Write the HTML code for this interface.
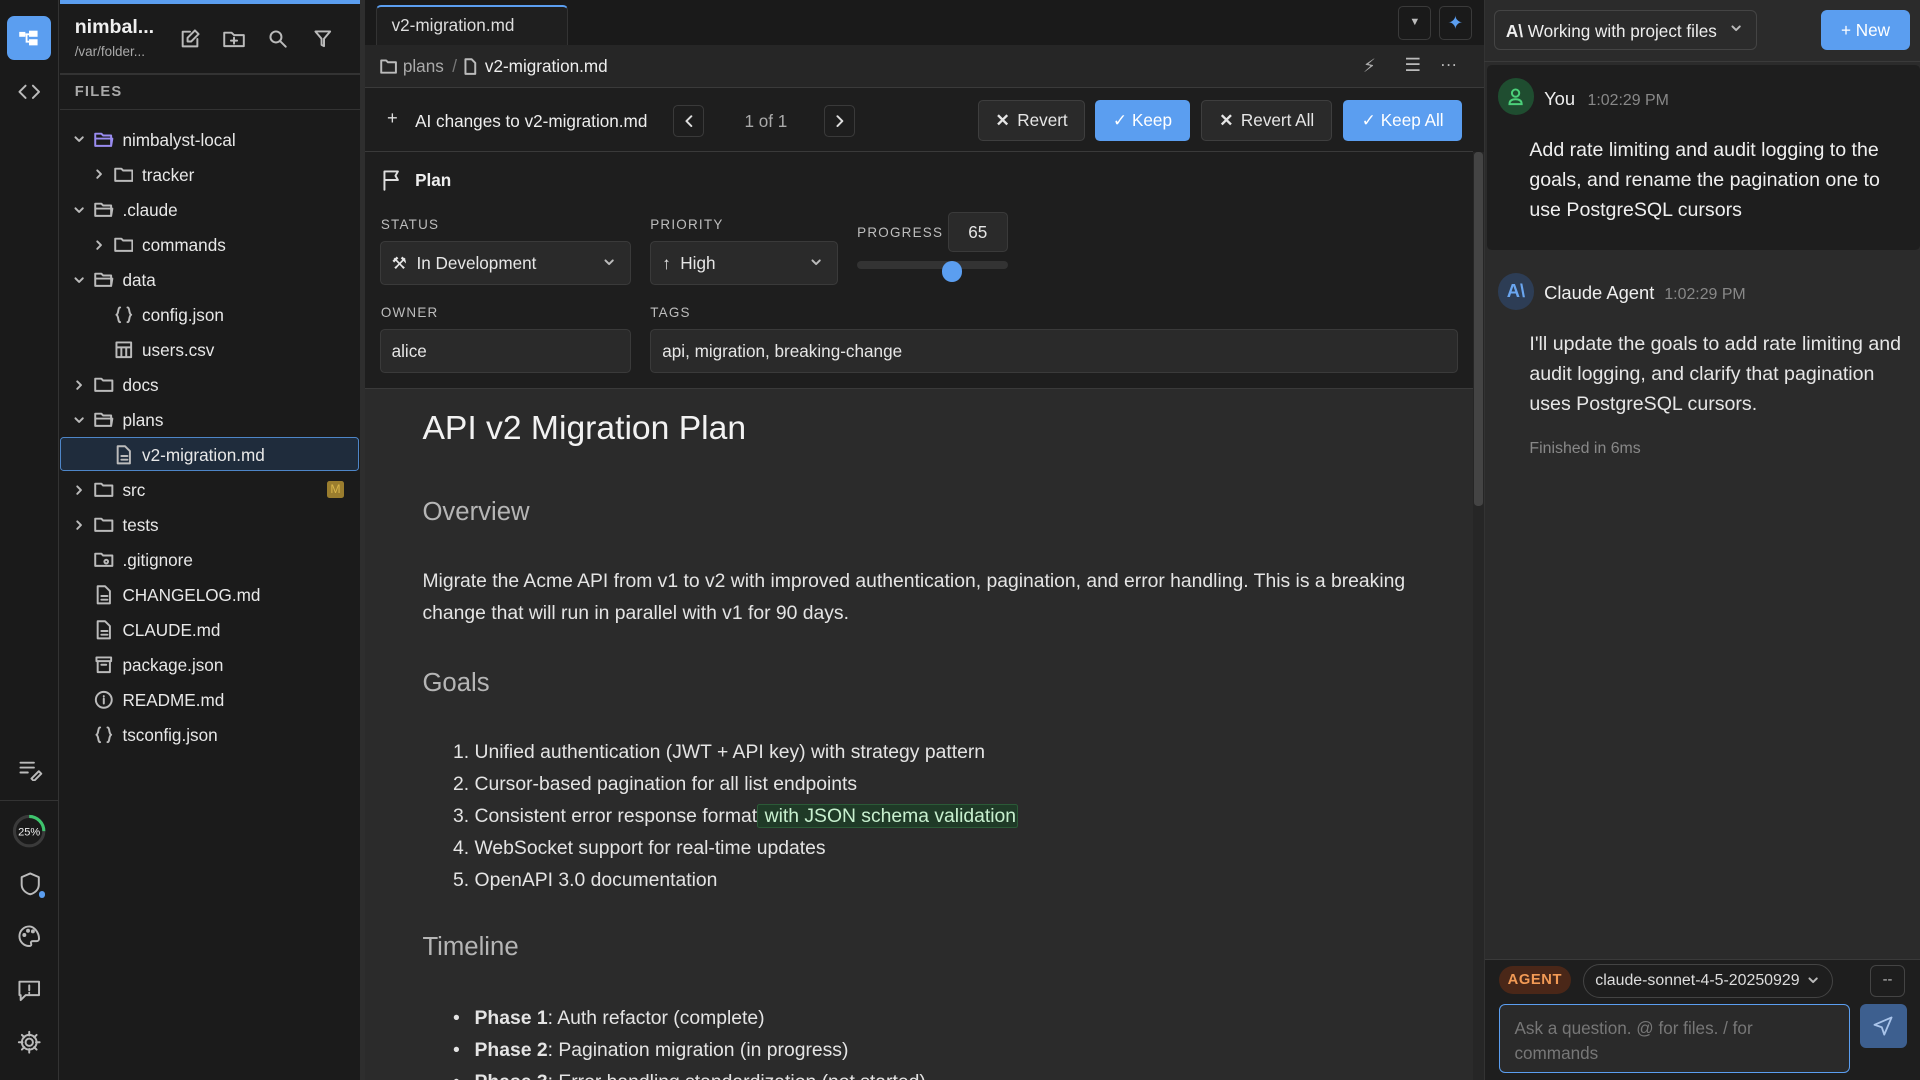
<!DOCTYPE html>
<html><head><meta charset="utf-8"><style>
*{box-sizing:border-box;margin:0;padding:0}
html,body{width:1920px;height:1080px;overflow:hidden;background:#1b1b1b}
#r{position:relative;width:1568px;height:882px;zoom:1.2244898;font-family:"Liberation Sans",sans-serif;color:#e6e6e6;overflow:hidden}
.a{position:absolute}
svg{display:block}
.ic{stroke:#bbb;fill:none;stroke-width:1.6;stroke-linecap:round;stroke-linejoin:round}
.row{position:absolute;left:49px;width:245px;height:28px;font-size:14px;color:#e8e8e8}
.row svg{position:absolute}
.row span{position:absolute}
.lbl{font-size:11px;letter-spacing:1px;color:#bdbdbd}
.inp{position:absolute;background:#2a2a2a;border:1px solid #3a3a3a;border-radius:4px;font-size:14px;color:#e6e6e6;display:flex;align-items:center;padding-left:9px}
.btn{position:absolute;top:82px;height:33px;border-radius:4px;font-size:14px;display:flex;align-items:center;justify-content:center;gap:6px}
.c{font-size:15.8px;color:#e4e4e4}
.dd{position:absolute;right:12px;top:13px}
</style></head><body><div id="r">
<!-- rail -->
<div class="a" style="left:0;top:0;width:48px;height:882px;background:#1a1a1a;border-right:1px solid #333"></div>
<div class="a" style="left:6px;top:13px;width:36px;height:36px;background:#5b9ef0;border-radius:6px"></div>
<svg class="a" style="left:15px;top:22px" width="18" height="18" viewBox="0 0 18 18"><rect x="1" y="4" width="5" height="4" fill="#fff"/><rect x="9" y="3" width="7" height="5" fill="#fff"/><rect x="9" y="10" width="7" height="5" fill="#fff"/><path d="M6 6h3M7 6v6h2" stroke="#fff" stroke-width="1.5" fill="none"/></svg>
<svg class="a ic" style="left:14px;top:67px" width="20" height="16" viewBox="0 0 20 16"><path d="M7 3 2 8l5 5M13 3l5 5-5 5"/></svg>
<svg class="a ic" style="left:15px;top:620px" width="20" height="18" viewBox="0 0 20 18"><path d="M2 3h11M2 7h11M2 11h6M11 16l6-6 2 2-6 6z"/></svg>
<div class="a" style="left:0;top:653px;width:48px;height:1px;background:#333"></div>
<svg class="a" style="left:10px;top:665px" width="28" height="28" viewBox="0 0 28 28"><circle cx="14" cy="14" r="12" stroke="#3a3a3a" stroke-width="2.5" fill="none"/><path d="M14 2a12 12 0 0 1 12 12" stroke="#3ec46d" stroke-width="2.5" fill="none"/><text x="14" y="17.5" font-size="9" fill="#eee" text-anchor="middle" font-family="Liberation Sans">25%</text></svg>
<svg class="a ic" style="left:15px;top:711px" width="20" height="22" viewBox="0 0 20 22"><path d="M10 2 3 5v6c0 4 3 7 7 8 4-1 7-4 7-8V5z"/></svg>
<div class="a" style="left:32px;top:728px;width:5px;height:5px;border-radius:50%;background:#5b9ef0"></div>
<svg class="a ic" style="left:14px;top:755px" width="20" height="20" viewBox="0 0 20 20"><path d="M10 2a8 8 0 0 0 0 16c1.5 0 2-1 1.5-2s0-2 1.5-2H16a2 2 0 0 0 2-2c0-5-4-10-8-10z"/><circle cx="6" cy="9" r=".8"/><circle cx="9" cy="5.5" r=".8"/><circle cx="13" cy="6" r=".8"/></svg>
<svg class="a ic" style="left:14px;top:799px" width="20" height="20" viewBox="0 0 20 20"><path d="M2 3h16v11H7l-4 4v-4H2zM10 6v4M10 12v.5"/></svg>
<svg class="a ic" style="left:14px;top:841px" width="20" height="20" viewBox="0 0 20 20"><circle cx="10" cy="10" r="3"/><path d="M10 1.5v3M10 15.5v3M1.5 10h3M15.5 10h3M4 4l2 2M14 14l2 2M4 16l2-2M14 6l2-2"/><circle cx="10" cy="10" r="6"/></svg>
<!-- file sidebar -->
<div class="a" style="left:49px;top:0;width:245px;height:882px;background:#1b1b1b"></div>
<div class="a" style="left:49px;top:0;width:245px;height:3px;background:#5b9ef0"></div>
<div class="a" style="left:61px;top:13px;font-size:16px;font-weight:bold;color:#f0f0f0">nimbal...</div>
<div class="a" style="left:61px;top:36px;font-size:11px;color:#aaa">/var/folder...</div>
<svg class="a ic" style="left:146px;top:23px" width="18" height="18" viewBox="0 0 18 18"><path d="M15 9v6H3V3h6M13 2l3 3-6 6H7V8z"/></svg>
<svg class="a ic" style="left:182px;top:24px" width="18" height="16" viewBox="0 0 18 16"><path d="M1 3h6l2 2h8v9H1zM9 7v5M6.5 9.5h5"/></svg>
<svg class="a ic" style="left:219px;top:24px" width="16" height="16" viewBox="0 0 16 16"><circle cx="6.5" cy="6.5" r="4.5"/><path d="m10 10 4.5 4.5"/></svg>
<svg class="a ic" style="left:256px;top:24px" width="16" height="16" viewBox="0 0 16 16"><path d="M2 2h12l-5 6v6l-2-1V8z"/></svg>
<div class="a" style="left:49px;top:60px;width:245px;height:1px;background:#333"></div>
<div class="a" style="left:61px;top:69px;font-size:12px;font-weight:bold;letter-spacing:1px;color:#aaa">FILES</div>
<div class="a" style="left:49px;top:89px;width:245px;height:1px;background:#333"></div>

<div class="a" style="left:49px;top:357px;width:244px;height:28px;background:#1f2c3c;border:1px solid #4e86c8;border-radius:3px"></div>

<div id="tree"></div>
<div class="a" style="left:267px;top:393px;width:14px;height:14px;background:#9a7d2e;border-radius:2px;color:#d8b54a;font-size:10px;text-align:center;line-height:14px">M</div>

<div class="a" style="left:294px;top:0;width:4px;height:882px;background:#2e2e2e"></div>
<!-- editor -->
<div class="a" style="left:298px;top:0;width:914px;height:37px;background:#1a1a1a"></div>
<div class="a" style="left:307px;top:4px;width:157px;height:33px;background:#1f1f1f;border:1px solid #333;border-bottom:none;border-top:2px solid #5b9ef0;border-radius:4px 4px 0 0;font-size:14px;color:#ddd;padding:7px 0 0 12px">v2-migration.md</div>
<div class="a" style="left:1142px;top:5px;width:27px;height:28px;border:1px solid #3a3a3a;border-radius:4px;color:#bbb;font-size:9px;text-align:center;line-height:26px">▼</div>
<div class="a" style="left:1175px;top:5px;width:27px;height:28px;border:1px solid #3a3a3a;border-radius:4px;color:#5b9ef0;font-size:15px;text-align:center;line-height:26px">✦</div>
<div class="a" style="left:298px;top:37px;width:914px;height:35px;background:#262626;border-bottom:1px solid #3a3a3a"></div>
<svg class="a ic" style="left:310px;top:47px" width="14" height="14" viewBox="0 0 14 14"><path d="M1 2h4l1.5 1.5H13V12H1z"/></svg>
<div class="a" style="left:329px;top:46px;font-size:14px;color:#aaa">plans <span style="color:#777;margin:0 3px">/</span></div>
<svg class="a ic" style="left:378px;top:47px" width="12" height="14" viewBox="0 0 12 14"><path d="M2 1h5l3 3v9H2z"/></svg>
<div class="a" style="left:396px;top:46px;font-size:14px;color:#eee">v2-migration.md</div>
<div class="a" style="left:1113px;top:45px;color:#aaa;font-size:15px">⚡︎</div>
<div class="a" style="left:1147px;top:44px;color:#bbb;font-size:15px">☰</div>
<div class="a" style="left:1176px;top:44px;color:#bbb;font-size:14px">···</div>

<div class="a" style="left:298px;top:72px;width:914px;height:245px;background:#1e1e1e"></div>
<div class="a" style="left:298px;top:123px;width:905px;height:1px;background:#3a3a3a"></div>
<div class="a" style="left:316px;top:87px;font-size:15px;color:#ddd">+</div>
<div class="a" style="left:339px;top:91px;font-size:14px;color:#eee">AI changes to v2-migration.md</div>
<div class="a" style="left:550px;top:86px;width:25px;height:26px;border:1px solid #3a3a3a;border-radius:4px"><svg class="ic" style="margin:7px 0 0 8px;stroke:#ddd" width="8" height="10" viewBox="0 0 8 10"><path d="M6 1 2 5l4 4"/></svg></div>
<div class="a" style="left:608px;top:91px;font-size:14px;color:#aaa">1 of 1</div>
<div class="a" style="left:673px;top:86px;width:25px;height:26px;border:1px solid #3a3a3a;border-radius:4px"><svg class="ic" style="margin:7px 0 0 8px;stroke:#ddd" width="8" height="10" viewBox="0 0 8 10"><path d="m2 1 4 4-4 4"/></svg></div>
<div class="btn" style="left:799px;width:87px;background:#2a2a2a;border:1px solid #3e3e3e;color:#e6e6e6"><b>✕</b> Revert</div>
<div class="btn" style="left:894px;width:78px;background:#5b9ef0;color:#fff">✓ Keep</div>
<div class="btn" style="left:981px;width:107px;background:#2a2a2a;border:1px solid #3e3e3e;color:#e6e6e6"><b>✕</b> Revert All</div>
<div class="btn" style="left:1097px;width:97px;background:#5b9ef0;color:#fff">✓ Keep All</div>

<svg class="a ic" style="left:312px;top:138px;stroke:#ddd" width="16" height="18" viewBox="0 0 16 18"><path d="M2 17V2h11l-2 3.5 2 3.5H2"/></svg>
<div class="a" style="left:339px;top:139px;font-size:14px;font-weight:bold;color:#eee">Plan</div>
<div class="a lbl" style="left:311px;top:177px">STATUS</div>
<div class="a lbl" style="left:531px;top:177px">PRIORITY</div>
<div class="a lbl" style="left:700px;top:184px">PROGRESS</div>
<div class="inp" style="left:310px;top:197px;width:205px;height:36px">⚒&nbsp; In Development<svg class="dd ic" width="10" height="8" viewBox="0 0 10 8"><path d="m2 2 3 3 3-3"/></svg></div>
<div class="inp" style="left:531px;top:197px;width:153px;height:36px">↑&nbsp; High<svg class="dd ic" width="10" height="8" viewBox="0 0 10 8"><path d="m2 2 3 3 3-3"/></svg></div>
<div class="inp" style="left:774px;top:173px;width:49px;height:33px;justify-content:center;padding:0;font-size:14px">65</div>
<div class="a" style="left:700px;top:213px;width:123px;height:7px;background:#333;border-radius:4px"></div>
<div class="a" style="left:769px;top:213px;width:17px;height:17px;background:#5b9ef0;border-radius:50%"></div>
<div class="a lbl" style="left:311px;top:249px">OWNER</div>
<div class="a lbl" style="left:531px;top:249px">TAGS</div>
<div class="inp" style="left:310px;top:269px;width:205px;height:36px">alice</div>
<div class="inp" style="left:531px;top:269px;width:660px;height:36px">api, migration, breaking-change</div>

<div class="a" style="left:298px;top:317px;width:905px;height:565px;background:#2b2b2b;border-top:1px solid #3a3a3a"></div>
<div class="a" style="left:1203px;top:124px;width:9px;height:758px;background:#262626"></div>
<div class="a" style="left:1204px;top:124px;width:7px;height:289px;background:#444;border-radius:3px"></div>

<div class="a" style="left:345px;top:335px;font-size:27.5px;color:#f2f2f2">API v2 Migration Plan</div>
<div class="a" style="left:345px;top:407px;font-size:21px;color:#b5b5b5">Overview</div>
<div class="a c" style="left:345px;top:462px;width:830px;line-height:26px">Migrate the Acme API from v1 to v2 with improved authentication, pagination, and error handling. This is a breaking change that will run in parallel with v1 for 90 days.</div>
<div class="a" style="left:345px;top:546px;font-size:21px;color:#b5b5b5">Goals</div>
<div class="a c" style="left:370px;top:601px;line-height:26.2px">
1. Unified authentication (JWT + API key) with strategy pattern<br>
2. Cursor-based pagination for all list endpoints<br>
3. Consistent error response format<span style="background:#1f3a27;border:1px solid #2b5a37;border-radius:2px;color:#c8f0cf;padding:0 1px"> with JSON schema validation</span><br>
4. WebSocket support for real-time updates<br>
5. OpenAPI 3.0 documentation</div>
<div class="a" style="left:345px;top:762px;font-size:21px;color:#b5b5b5">Timeline</div>
<div class="a c" style="left:370px;top:818px;line-height:26.2px">
<span style="margin-right:12px">•</span><b>Phase 1</b>: Auth refactor (complete)<br>
<span style="margin-right:12px">•</span><b>Phase 2</b>: Pagination migration (in progress)<br>
<span style="margin-right:12px">•</span><b>Phase 3</b>: Error handling standardization (not started)</div>

<!-- right panel -->
<div class="a" style="left:1212px;top:0;width:356px;height:882px;background:#2b2b2b;border-left:1px solid #333"></div>
<div class="a" style="left:1212px;top:50px;width:356px;height:1px;background:#3a3a3a"></div>
<div class="a" style="left:1220px;top:8px;width:215px;height:33px;border:1px solid #444;border-radius:5px;font-size:14px;color:#eee;padding:8px 0 0 9px"><b>A\</b> Working with project files</div>
<svg class="a ic" style="left:1413px;top:20px" width="10" height="8" viewBox="0 0 10 8"><path d="m2 2 3 3 3-3"/></svg>
<div class="a" style="left:1487px;top:8px;width:73px;height:33px;background:#5b9ef0;border-radius:5px;color:#fff;font-size:14px;text-align:center;line-height:33px">+ New</div>
<div class="a" style="left:1214px;top:53px;width:354px;height:151px;background:#1e1e1e;border-radius:4px"></div>
<div class="a" style="left:1223px;top:64px;width:30px;height:30px;border-radius:50%;background:#1f4d30"></div>
<svg class="a" style="left:1231px;top:71px" width="14" height="16" viewBox="0 0 14 16"><circle cx="7" cy="5" r="3" stroke="#4cd07a" stroke-width="1.6" fill="none"/><path d="M2 14c0-3 2-4 5-4s5 1 5 4z" stroke="#4cd07a" stroke-width="1.6" fill="none"/></svg>
<div class="a" style="left:1261px;top:72px;font-size:15px;color:#eee">You <span style="font-size:13px;color:#888;margin-left:6px">1:02:29 PM</span></div>
<div class="a" style="left:1249px;top:110px;width:310px;font-size:16px;line-height:24.5px;color:#f0f0f0">Add rate limiting and audit logging to the goals, and rename the pagination one to use PostgreSQL cursors</div>
<div class="a" style="left:1223px;top:223px;width:30px;height:30px;border-radius:50%;background:#2d3d55;color:#6aa6f0;font-weight:bold;font-size:15px;text-align:center;line-height:30px">A\</div>
<div class="a" style="left:1261px;top:230px;font-size:15px;color:#eee">Claude Agent <span style="font-size:13px;color:#888;margin-left:4px">1:02:29 PM</span></div>
<div class="a" style="left:1249px;top:269px;width:312px;font-size:16px;line-height:24.5px;color:#e6e6e6">I'll update the goals to add rate limiting and audit logging, and clarify that pagination uses PostgreSQL cursors.</div>
<div class="a" style="left:1249px;top:359px;font-size:13px;color:#888">Finished in 6ms</div>
<div class="a" style="left:1213px;top:783px;width:355px;height:99px;background:#1e1e1e;border-top:1px solid #3a3a3a"></div>
<div class="a" style="left:1224px;top:789px;width:59px;height:23px;border-radius:12px;background:#4a2718;color:#f29a55;font-size:12px;font-weight:bold;letter-spacing:.5px;text-align:center;line-height:23px">AGENT</div>
<div class="a" style="left:1293px;top:787px;width:204px;height:28px;border:1px solid #444;border-radius:14px;font-size:13px;color:#ddd;padding:6px 0 0 9px">claude-sonnet-4-5-20250929</div>
<svg class="a ic" style="left:1476px;top:797px" width="10" height="8" viewBox="0 0 10 8"><path d="m2 2 3 3 3-3"/></svg>
<div class="a" style="left:1527px;top:788px;width:29px;height:26px;border:1px solid #444;border-radius:5px;color:#bbb;font-size:12px;text-align:center;line-height:24px">--</div>
<div class="a" style="left:1224px;top:820px;width:287px;height:56px;background:#2a2a2a;border:1px solid #5b9ef0;border-radius:5px;font-size:14px;line-height:20px;color:#777;padding:9px 12px">Ask a question. @ for files. / for commands</div>
<div class="a" style="left:1519px;top:820px;width:38px;height:36px;background:#3d5f8f;border-radius:5px"></div>
<svg class="a" style="left:1529px;top:829px" width="18" height="18" viewBox="0 0 18 18"><path d="M16 2 2 8l6 2 2 6z" stroke="#a9c4ea" stroke-width="1.5" fill="none" stroke-linejoin="round"/></svg>
</div>
<script>
var rows=[
[0,'v','fo','nimbalyst-local',1],[1,'>','f','tracker'],[0,'v','fo','.claude'],[1,'>','f','commands'],[0,'v','fo','data'],
[1,'','j','config.json'],[1,'','t','users.csv'],[0,'>','f','docs'],[0,'v','fo','plans'],[1,'','d','v2-migration.md'],
[0,'>','f','src'],[0,'>','f','tests'],[0,'','g','.gitignore'],[0,'','d','CHANGELOG.md'],[0,'','d','CLAUDE.md'],
[0,'','p','package.json'],[0,'','i','README.md'],[0,'','j','tsconfig.json']];
var P={fo:'<path d="M1 3h5l1.5 1.5H14V13H1zM1 7h14l-1 6"/>',f:'<path d="M1 3h5l1.5 1.5H15V13H1z"/>',
j:'<path d="M5 2C3 2 4 7 2 8c2 1 1 6 3 6M11 2c2 0 1 5 3 6-2 1-1 6-3 6"/>',t:'<path d="M2 2h12v12H2zM2 6h12M6 6v8M10 6v8"/>',
d:'<path d="M3 1h6l4 4v10H3zM6 9h5M6 12h5"/>',g:'<path d="M1 3h5l1.5 1.5H15V13H1z"/><circle cx="10" cy="9.5" r="1.5"/>',
p:'<path d="M2 2h12v3H2zM3 5v9h10V5M6 8h4"/>',i:'<circle cx="8" cy="8" r="6.5"/><path d="M8 7v4M8 5v.3"/>'};
var h='';
rows.forEach(function(r,k){var top=100+k*28.6,ind=r[0]*16;
var col=r[4]?'#9a8cf0':'#bbb';
h+='<div class="row" style="top:'+top+'px">';
if(r[1])h+='<svg class="ic" style="left:'+(11+ind)+'px;top:9px" width="10" height="10" viewBox="0 0 10 10"><path d="'+(r[1]=='v'?'M2 3.5 5 6.5 8 3.5':'M3.5 2 6.5 5 3.5 8')+'"/></svg>';
h+='<svg class="ic" style="left:'+(28+ind)+'px;top:6px;stroke:'+col+'" width="16" height="16" viewBox="0 0 16 16">'+P[r[2]]+'</svg>';
h+='<span style="left:'+(51+ind)+'px;top:6px">'+r[3]+'</span></div>';});
document.getElementById('tree').outerHTML=h;
</script>
</body></html>
